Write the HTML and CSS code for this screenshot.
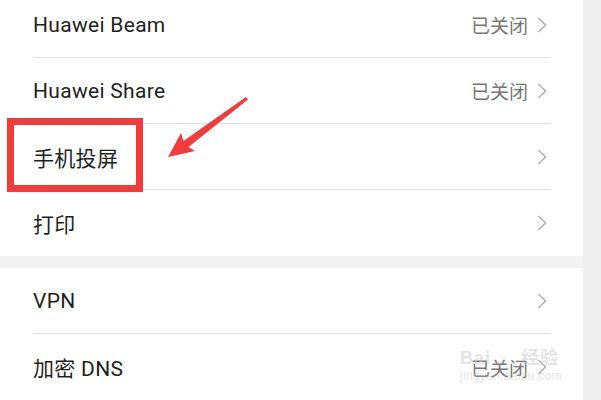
FILE: index.html
```html
<!DOCTYPE html>
<html lang="zh-CN">
<head>
    <meta charset="UTF-8">
    <meta name="viewport" content="width=device-width, initial-scale=1.0">
    <title>更多连接</title>
    <link rel="stylesheet" href="styles.css">
</head>
<body>
    <div class="page">
        <div class="panel">
            <div class="group first">
                <div class="row">
                    <div class="row-inner">
                        <span class="label">Huawei Beam</span>
                        <span class="value">已关闭<svg class="chev" viewBox="0 0 10 16"><polyline points="1.5,1 8.5,8 1.5,15"/></svg></span>
                    </div>
                </div>
                <div class="row">
                    <div class="row-inner">
                        <span class="label">Huawei Share</span>
                        <span class="value">已关闭<svg class="chev" viewBox="0 0 10 16"><polyline points="1.5,1 8.5,8 1.5,15"/></svg></span>
                    </div>
                </div>
                <div class="row">
                    <div class="row-inner">
                        <span class="label">手机投屏</span>
                        <span class="value"><svg class="chev" viewBox="0 0 10 16"><polyline points="1.5,1 8.5,8 1.5,15"/></svg></span>
                    </div>
                </div>
                <div class="row">
                    <div class="row-inner last">
                        <span class="label">打印</span>
                        <span class="value"><svg class="chev" viewBox="0 0 10 16"><polyline points="1.5,1 8.5,8 1.5,15"/></svg></span>
                    </div>
                </div>
            </div>
            <div class="gap"></div>
            <div class="group">
                <div class="row">
                    <div class="row-inner">
                        <span class="label">VPN</span>
                        <span class="value"><svg class="chev" viewBox="0 0 10 16"><polyline points="1.5,1 8.5,8 1.5,15"/></svg></span>
                    </div>
                </div>
                <div class="row">
                    <div class="row-inner last">
                        <span class="label">加密 DNS</span>
                        <span class="value">已关闭<svg class="chev" viewBox="0 0 10 16"><polyline points="1.5,1 8.5,8 1.5,15"/></svg></span>
                    </div>
                </div>
            </div>
        </div>
        <div class="side"></div>
    </div>

    <!-- annotation -->
    <div class="mark-box"></div>
    <svg class="mark-arrow" width="601" height="400" viewBox="0 0 601 400">
        <polygon points="168,157 181,133 183.5,141 246,97 248,99.5 188.5,147 195,151" fill="#f23b3b"/>
    </svg>

    <div class="watermark">
        <span class="wm-top">Bai 经验</span>
        <span class="wm-url">jingyan.baidu.com</span>
    </div>
</body>
</html>
```

FILE: styles.css
```css
body {
    margin: 0;
    padding: 0;
    font-family: Roboto, "Noto Sans CJK SC", sans-serif;
    background-color: #ffffff;
    color: #1f1f1f;
    overflow: hidden;
}

.page {
    display: flex;
    width: 601px;
    height: 400px;
    overflow: hidden;
}

.panel {
    width: 583px;
    background-color: #ffffff;
}

.side {
    flex: 1;
    background-color: #efefef;
}

.group.first {
    margin-top: -8px;
}

.row {
    padding: 0 32px 0 33px;
}

.row-inner {
    height: 65px;
    border-bottom: 1px solid #e2e2e2;
    display: flex;
    align-items: center;
    justify-content: space-between;
}

.row-inner.last {
    border-bottom: none;
    height: 66px;
}

.label {
    font-size: 21px;
    letter-spacing: 0.3px;
}

.value {
    display: flex;
    align-items: center;
    font-size: 19px;
    color: #777777;
    margin-right: 4px;
}

.chev {
    width: 10px;
    height: 16px;
    margin-left: 9px;
    fill: none;
    stroke: #b0b0b0;
    stroke-width: 1.5;
}

.gap {
    height: 12px;
    background-color: #f2f2f2;
}

.mark-box {
    position: absolute;
    left: 7px;
    top: 118px;
    width: 122px;
    height: 60px;
    border: 7px solid #f23b3b;
}

.mark-arrow {
    position: absolute;
    left: 0;
    top: 0;
}

.watermark {
    position: absolute;
    left: 460px;
    top: 343px;
    display: flex;
    flex-direction: column;
    color: rgba(200, 200, 200, 0.5);
    font-family: "Liberation Sans", "Noto Sans CJK SC", sans-serif;
}

.wm-top {
    font-size: 18px;
    font-weight: bold;
    letter-spacing: 1px;
    word-spacing: 24px;
}

.wm-url {
    font-size: 12px;
    letter-spacing: 0.3px;
}
```
